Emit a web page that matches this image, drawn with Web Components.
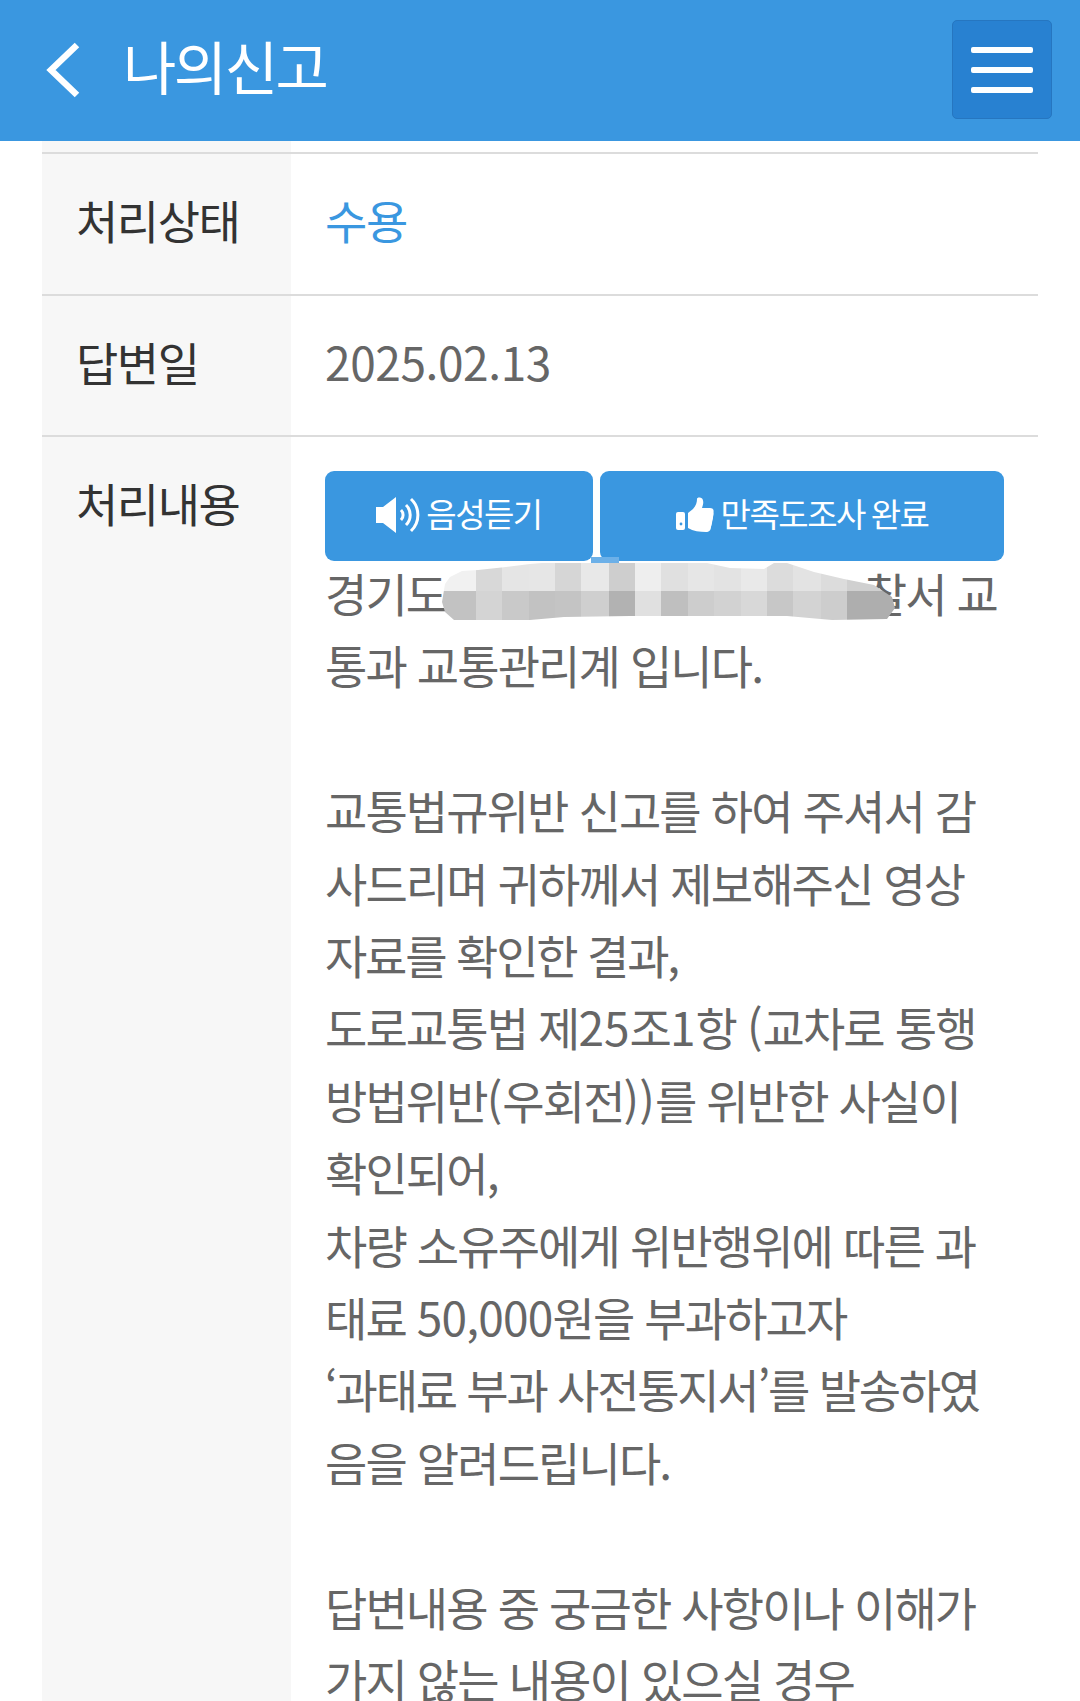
<!DOCTYPE html>
<html lang="ko"><head><meta charset="utf-8"><title>나의신고</title>
<style>
html,body{margin:0;padding:0;background:#fff;height:1701px;overflow:hidden}
body{font-family:"Noto Sans CJK KR","Noto Sans",sans-serif}
</style></head><body>
<app-header>나의신고</app-header>
<info-table>
  <info-row label="처리상태"><status-text>수용</status-text></info-row>
  <info-row label="답변일"><span style="letter-spacing:-.4px">2025.02.13</span></info-row>
  <info-row label="처리내용" top>
    <action-bar>
      <action-button icon="sound" grow="268">음성듣기</action-button>
      <action-button icon="thumb" grow="404">만족도조사 완료</action-button>
    </action-bar>
    <answer-text>
      <div class="first"><span>경기도</span><span style="margin-right:7px">찰서 교</span><blur-mosaic></blur-mosaic></div>
      <div>통과 교통관리계 입니다.</div>
      <div>&nbsp;</div>
      <div>교통법규위반 신고를 하여 주셔서 감</div>
      <div>사드리며 귀하께서 제보해주신 영상</div>
      <div style="letter-spacing:-2.2px">자료를 확인한 결과,</div>
      <div>도로교통법 제<span style="letter-spacing:0">25</span>조<span style="letter-spacing:0">1</span>항 <span style="letter-spacing:0">(</span>교차로 통행</div>
      <div>방법위반<span style="letter-spacing:.1px">(</span>우회전<span style="letter-spacing:.1px">))</span>를 위반한 사실이</div>
      <div>확인되어,</div>
      <div>차량 소유주에게 위반행위에 따른 과</div>
      <div>태료 <span style="letter-spacing:-.8px">50,000</span>원을 부과하고자</div>
      <div style="letter-spacing:-2.26px">‘과태료 부과 사전통지서’를 발송하였</div>
      <div>음을 알려드립니다.</div>
      <div>&nbsp;</div>
      <div>답변내용 중 궁금한 사항이나 이해가</div>
      <div>가지 않는 내용이 있으실 경우</div>
    </answer-text>
  </info-row>
</info-table>
<script>
function shadow(el,html){el.attachShadow({mode:'open'}).innerHTML=html}
customElements.define('app-header',class extends HTMLElement{connectedCallback(){shadow(this,`<style>
:host{display:flex;align-items:center;height:141px;background:#3a97e0;color:#fff;box-sizing:border-box;padding:0 28px 2px 45px}
svg{width:36px;height:56px;flex:none;margin-right:42px}
.t{flex:1;font-size:58px;letter-spacing:-2.5px;line-height:1;margin-bottom:10px}
</style><svg viewBox="0 0 36 56"><polyline points="32,3 6,28 32,53" fill="none" stroke="#fff" stroke-width="6.500"/></svg><div class="t"><slot></slot></div><menu-button></menu-button>`)}});
customElements.define('menu-button',class extends HTMLElement{connectedCallback(){shadow(this,`<style>
:host{display:flex;flex-direction:column;justify-content:center;gap:14px;width:100px;height:99px;box-sizing:border-box;padding:0 18px;background:#2881d1;border:1px solid #2676c0;border-radius:5px}
i{display:block;height:6px;background:#fff;border-radius:2px}
</style><i></i><i></i><i></i>`)}});
customElements.define('info-table',class extends HTMLElement{connectedCallback(){shadow(this,`<style>
:host{display:block;margin:0 42px;padding-top:11px;background:linear-gradient(90deg,#f7f7f7 249px,#fff 249px)}
</style><slot></slot>`)}});
customElements.define('info-row',class extends HTMLElement{connectedCallback(){const top=this.hasAttribute('top');shadow(this,`<style>
:host{display:grid;grid-template-columns:249px 1fr;border-top:2px solid #dcdcdc;min-height:139.5px;font-size:46px;letter-spacing:-1.9px;line-height:72px;color:#666}
.l{padding-left:34px;color:#333;letter-spacing:-1.5px;display:flex;align-items:${top?'flex-start':'center'};${top?'padding-top:29px':'padding-bottom:9px'}}
.v{padding:${top?'34px 34px 0':'0 34px 9px'};${top?'':'display:flex;align-items:center'}}
</style><div class="l">${this.getAttribute('label')}</div><div class="v"><slot></slot></div>`)}});
customElements.define('status-text',class extends HTMLElement{connectedCallback(){shadow(this,`<style>:host{color:#3a97e0;letter-spacing:-1.3px}</style><slot></slot>`)}});
customElements.define('action-bar',class extends HTMLElement{connectedCallback(){shadow(this,`<style>:host{display:flex;gap:7px;margin-bottom:-5px}</style><slot></slot>`)}});
const ICONS={
sound:`<svg width="44" height="36" viewBox="0 0 44 36" style="margin-right:6px"><path d="M0 10h7L20 0v36L7 26H0z" fill="#fff"/><g fill="none" stroke="#fff" stroke-width="3"><path d="M25 13a7 7 0 0 1 0 10"/><path d="M30 8a14 14 0 0 1 0 20"/><path d="M35 2a22 22 0 0 1 0 32"/></g></svg>`,
thumb:`<svg width="38" height="36" viewBox="0 0 38 36" style="margin-right:7px"><rect x="0" y="15" width="9" height="18" rx="2" fill="#fff"/><circle cx="5" cy="27" r="1.400" fill="#3a97e0"/><path d="M12 16L17 12C20 9 21 5 21 2C21 0 25 0 26.500 2C28 5 27 8 26 11H34C37 11 38 13 37.500 15C38 18 37 19 37 21C37 23 36 24 36 26C36 28 35 29 35 30C35 33 33 35 30 35C24 35 17 34 12 31z" fill="#fff"/></svg>`};
customElements.define('action-button',class extends HTMLElement{connectedCallback(){shadow(this,`<style>
:host{display:flex;align-items:center;justify-content:center;flex:${this.getAttribute('grow')} 1 0;height:90px;background:#3a97e0;color:#fff;border-radius:9px;font-size:33px;letter-spacing:-1.5px;word-spacing:-2px;line-height:1}
.s{padding-bottom:5px}
svg{margin-top:-2px}
</style>${ICONS[this.getAttribute('icon')]}<span class="s"><slot></slot></span>`)}});
customElements.define('answer-text',class extends HTMLElement{connectedCallback(){shadow(this,`<style>
:host{display:block;white-space:nowrap;line-height:72.4px;position:relative}
</style><slot></slot>`);const f=this.querySelector('.first');f.style.cssText='display:flex;justify-content:space-between;position:relative'}});
customElements.define('blur-mosaic',class extends HTMLElement{connectedCallback(){
const a=['#f1f1f1','#d8d8d8','#e5e5e5','#e6e6e6','#d6d6d6','#e8e8e8','#cecece','#eeeeee','#e0e0e0','#e6e6e6','#e3e3e3','#e9e9e9','#dcdcdc','#e3e3e3','#dcdcdc','#d0d0d0'];
const b=['#c2c2c2','#d4d4d4','#c9c9c9','#c2c2c2','#c4c4c4','#cfcfcf','#b2b2b2','#e0e0e0','#bfbfbf','#cdcdcd','#d2d2d2','#d8d8d8','#c7c7c7','#d3d3d3','#cdcdcd','#aeaeae'];
const w=[36,28,28,28,28,29,28,28,28,28,28,28,28,29,28,51];
const row=c=>c.map((x,i)=>`<i style="width:${w[i]}px;background:${x}"></i>`).join('');
shadow(this,`<style>
:host{position:absolute;left:117px;top:6px;width:453px;height:58px}
.m{width:100%;height:100%;display:flex;flex-direction:column;clip-path:polygon(8px 15px,20px 9px,36px 8px,64px 5px,88px 2px,100px 1px,265px 1px,288px 6px,322px 7px,332px 1px,345px 1px,372px 10px,402px 17px,432px 23px,450px 35px,453px 46px,445px 57px,390px 58px,345px 54px,256px 54px,188px 54px,122px 55px,88px 58px,12px 58px,3px 50px,0 40px,3px 22px);}
.r{display:flex;height:29px}i{display:block;height:29px}
.p{position:absolute;left:149px;top:-5px;width:28px;height:6px;background:#6cb0e8}
</style><div class="p"></div><div class="m"><div class="r">${row(a)}</div><div class="r">${row(b)}</div></div>`)}});
</script>
</body></html>
